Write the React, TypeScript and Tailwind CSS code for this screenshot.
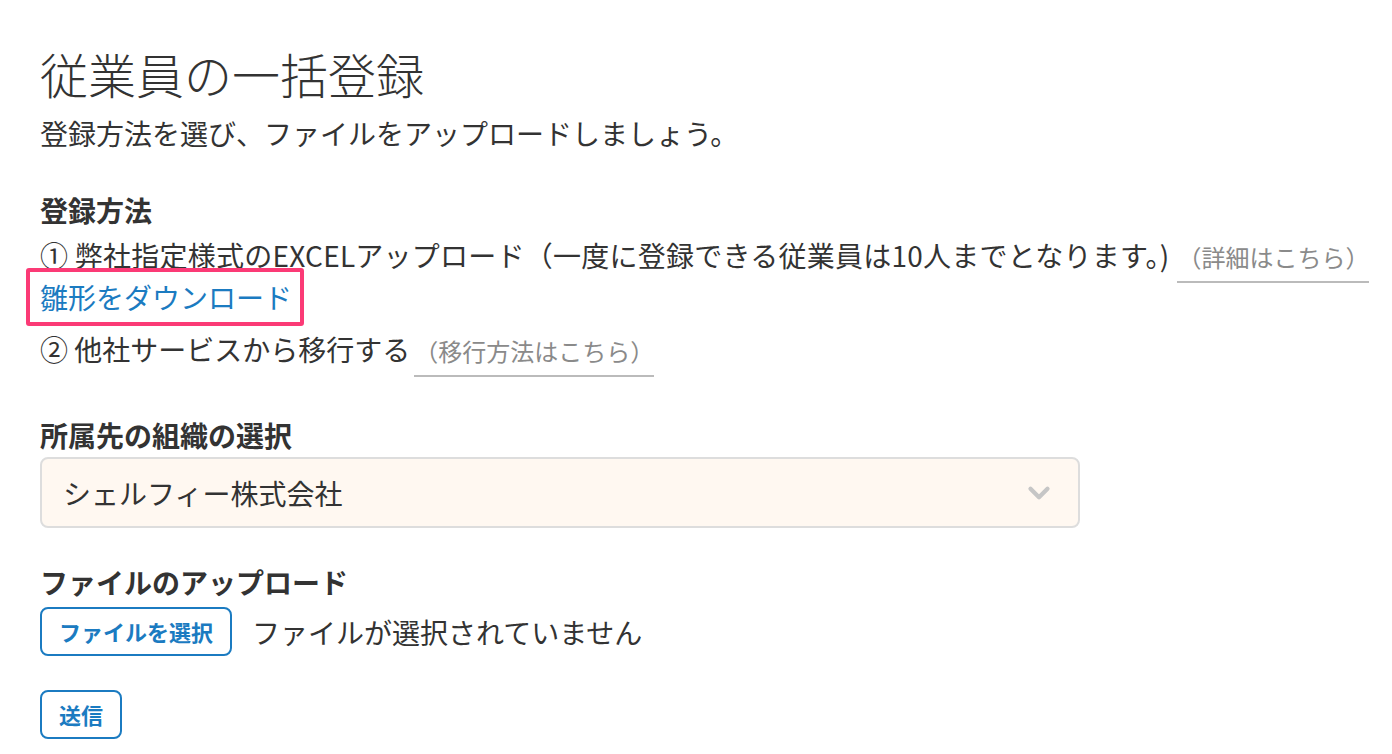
import { ChevronDown } from "lucide-react";

const font = {
  fontFamily: '"Noto Sans CJK JP", "Noto Sans", sans-serif',
};

const NoteLink = ({
  children,
  className = "",
}: {
  children: React.ReactNode;
  className?: string;
}) => (
  <span
    className={`inline-block border-b-2 border-[#bbbbbb] pb-[4px] -mb-[6px] text-[24px] leading-[40px] tracking-normal text-[#8a8a8a] ${className}`}
  >
    {children}
  </span>
);

export default function App() {
  return (
    <div
      className="min-h-screen bg-white px-[40px] pt-[43px] text-[#333333]"
      style={font}
    >
      <h1 className="text-[48px] font-light leading-[60px]">
        従業員の一括登録
      </h1>
      <p className="mt-[10px] text-[28px] leading-[40px]">
        登録方法を選び、ファイルをアップロードしましょう。
      </p>

      <h2 className="mt-[37px] text-[28px] font-bold leading-[40px]">
        登録方法
      </h2>
      <div className="mt-[5px] whitespace-nowrap text-[28px] leading-[40px] tracking-[0.25px]">
        ① 弊社指定様式のEXCELアップロード（一度に登録できる従業員は10人までとなります。)
        <NoteLink className="ml-2">（詳細はこちら）</NoteLink>
      </div>
      <div className="text-[28px] leading-[40px]">
        <span className="relative inline-block text-[#1b7bc1]">
          雛形をダウンロード
          <span className="absolute -left-[14px] -right-[12px] -top-[9px] -bottom-[9px] rounded-[3px] border-4 border-[#fb3a76]" />
        </span>
      </div>
      <div className="mt-[12px] whitespace-nowrap text-[28px] leading-[40px]">
        ② 他社サービスから移行する
        <NoteLink className="ml-[4px]">（移行方法はこちら）</NoteLink>
      </div>

      <h2 className="mt-[44px] text-[28px] font-bold leading-[40px]">
        所属先の組織の選択
      </h2>
      <div className="mt-[2px] flex h-[71px] w-[1040px] items-center justify-between rounded-[8px] border-2 border-[#dddddd] bg-[#fff8f1] pl-[21px] pr-[22px]">
        <span className="text-[28px] leading-[40px]">シェルフィー株式会社</span>
        <ChevronDown className="h-[34px] w-[34px] text-[#c6c6c6]" strokeWidth={3} />
      </div>

      <h2 className="mt-[34px] text-[28px] font-bold leading-[40px]">
        ファイルのアップロード
      </h2>
      <div className="mt-[5px] flex items-center">
        <button className="h-[49px] rounded-[8px] border-2 border-[#1b7bc1] px-[17px] text-[22px] font-bold text-[#1b7bc1]">
          ファイルを選択
        </button>
        <span className="ml-[20px] text-[28px] leading-[40px]">
          ファイルが選択されていません
        </span>
      </div>

      <button className="mt-[34px] h-[49px] rounded-[8px] border-2 border-[#1b7bc1] px-[17px] text-[22px] font-bold text-[#1b7bc1]">
        送信
      </button>
    </div>
  );
}
